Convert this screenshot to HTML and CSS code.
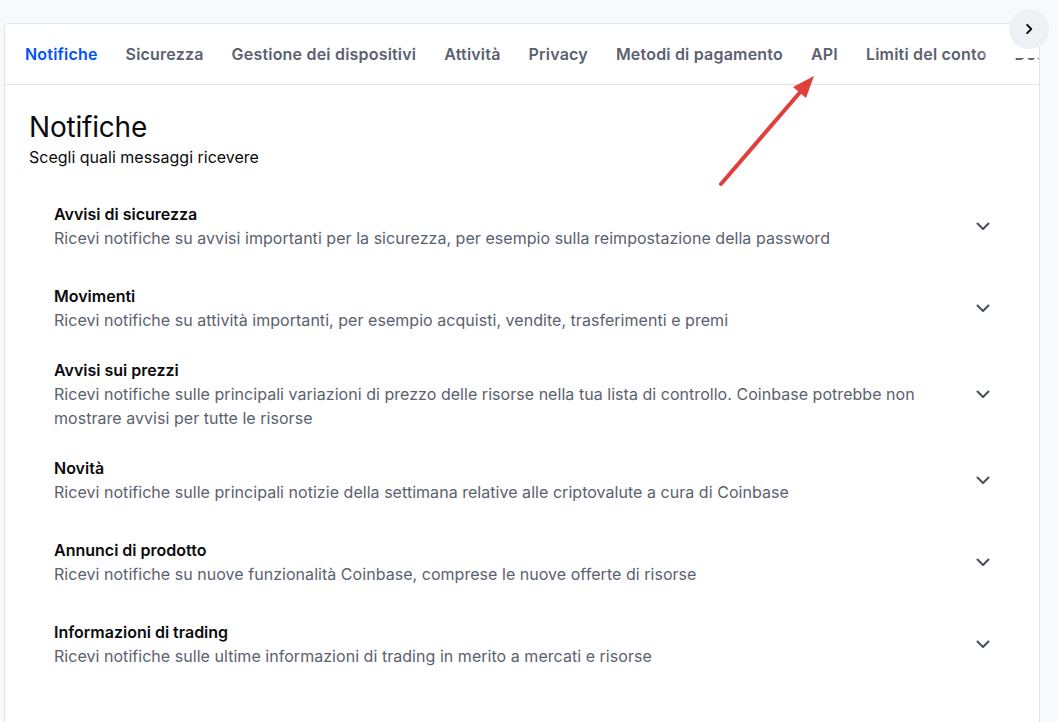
FILE: index.html
```html
<!DOCTYPE html>
<html lang="it">
<head>
<meta charset="utf-8">
<title>Notifiche</title>
<link rel="stylesheet" href="styles.css">
</head>
<body>
<div class="page">
  <div class="card">
    <nav class="tabs">
      <span class="tab active">Notifiche</span>
      <span class="tab">Sicurezza</span>
      <span class="tab">Gestione dei dispositivi</span>
      <span class="tab">Attività</span>
      <span class="tab">Privacy</span>
      <span class="tab">Metodi di pagamento</span>
      <span class="tab">API</span>
      <span class="tab">Limiti del conto</span>
      <span class="tab">Documenti</span>
      <div class="tab-fade"></div>
    </nav>
    <section class="content">
      <h1 class="title">Notifiche</h1>
      <p class="subtitle">Scegli quali messaggi ricevere</p>
      <div class="list">
        <div class="row">
          <div class="row-text">
            <div class="row-title">Avvisi di sicurezza</div>
            <div class="row-desc">Ricevi notifiche su avvisi importanti per la sicurezza, per esempio sulla reimpostazione della password</div>
          </div>
          <svg class="chev" viewBox="0 0 24 24"><path d="M6.5 9.5l5.5 5.5 5.5-5.5"/></svg>
        </div>
        <div class="row">
          <div class="row-text">
            <div class="row-title">Movimenti</div>
            <div class="row-desc">Ricevi notifiche su attività importanti, per esempio acquisti, vendite, trasferimenti e premi</div>
          </div>
          <svg class="chev" viewBox="0 0 24 24"><path d="M6.5 9.5l5.5 5.5 5.5-5.5"/></svg>
        </div>
        <div class="row">
          <div class="row-text">
            <div class="row-title">Avvisi sui prezzi</div>
            <div class="row-desc">Ricevi notifiche sulle principali variazioni di prezzo delle risorse nella tua lista di controllo. Coinbase potrebbe non mostrare avvisi per tutte le risorse</div>
          </div>
          <svg class="chev" viewBox="0 0 24 24"><path d="M6.5 9.5l5.5 5.5 5.5-5.5"/></svg>
        </div>
        <div class="row">
          <div class="row-text">
            <div class="row-title">Novità</div>
            <div class="row-desc">Ricevi notifiche sulle principali notizie della settimana relative alle criptovalute a cura di Coinbase</div>
          </div>
          <svg class="chev" viewBox="0 0 24 24"><path d="M6.5 9.5l5.5 5.5 5.5-5.5"/></svg>
        </div>
        <div class="row">
          <div class="row-text">
            <div class="row-title">Annunci di prodotto</div>
            <div class="row-desc">Ricevi notifiche su nuove funzionalità Coinbase, comprese le nuove offerte di risorse</div>
          </div>
          <svg class="chev" viewBox="0 0 24 24"><path d="M6.5 9.5l5.5 5.5 5.5-5.5"/></svg>
        </div>
        <div class="row">
          <div class="row-text">
            <div class="row-title">Informazioni di trading</div>
            <div class="row-desc">Ricevi notifiche sulle ultime informazioni di trading in merito a mercati e risorse</div>
          </div>
          <svg class="chev" viewBox="0 0 24 24"><path d="M6.5 9.5l5.5 5.5 5.5-5.5"/></svg>
        </div>
      </div>
    </section>
  </div>
  <button class="scroll-btn" aria-label="Avanti">
    <svg viewBox="0 0 24 24"><path d="M9.5 6.5l5.5 5.5-5.5 5.5"/></svg>
  </button>
  <svg class="annot" viewBox="0 0 1058 722" width="1058" height="722">
    <line x1="721" y1="184" x2="802" y2="90" />
    <polygon points="814,76 806,98 793,87" />
  </svg>
</div>
</body>
</html>
```
FILE: styles.css
```css
* { box-sizing: border-box; }
html, body { margin: 0; padding: 0; }
body {
  background: #f8f9fb;
  font-family: Inter, "Noto Sans", "Liberation Sans", sans-serif;
  color: #0a0b0d;
  overflow: hidden;
}
.page {
  position: relative;
  width: 1058px;
  height: 722px;
  padding: 23px 18px 0 4px;
}
.card {
  background: #fff;
  border: 1px solid #e1e3e8;
  border-radius: 4px 0 0 0;
  height: 760px;
}
.tabs {
  position: relative;
  display: flex;
  align-items: center;
  gap: 28px;
  height: 61px;
  padding-left: 20px;
  border-bottom: 1px solid #e1e3e8;
  overflow: hidden;
  white-space: nowrap;
}
.tab {
  font-size: 16px;
  font-weight: 600;
  line-height: 24px;
  letter-spacing: 0.2px;
  color: #5b616e;
  flex: none;
}
.tab.active { color: #0052ff; }
.tab-fade {
  position: absolute;
  top: 0;
  right: 0;
  width: 62px;
  height: 34px;
  background: linear-gradient(to right, rgba(255,255,255,0) 0, #fff 30px);
}
.content {
  padding: 24px 44px 0 24px;
}
.title {
  margin: 0;
  font-size: 28px;
  font-weight: 400;
  line-height: 36px;
  letter-spacing: -0.2px;
}
.subtitle {
  margin: 0;
  font-size: 16px;
  line-height: 24px;
}
.list {
  margin-top: 16px;
  padding-left: 25px;
}
.row {
  display: flex;
  align-items: center;
  gap: 16px;
  padding: 9px 0;
}
.row-text {
  flex: 1;
  min-height: 64px;
  display: flex;
  flex-direction: column;
  justify-content: center;
}
.row-title {
  font-size: 16px;
  font-weight: 600;
  line-height: 24px;
}
.row-desc {
  font-size: 16px;
  line-height: 24px;
  letter-spacing: 0.04px;
  color: #5b616e;
}
.chev {
  width: 24px;
  height: 24px;
  flex: none;
  fill: none;
  stroke: #4a4f5a;
  stroke-width: 2;
  stroke-linecap: round;
  stroke-linejoin: round;
}
.scroll-btn {
  position: absolute;
  top: 9px;
  left: 1009px;
  width: 40px;
  height: 40px;
  border: none;
  border-radius: 50%;
  background: #eef0f3;
  padding: 0;
  display: flex;
  align-items: center;
  justify-content: center;
}
.scroll-btn svg {
  width: 18px;
  height: 18px;
  fill: none;
  stroke: #0a0b0d;
  stroke-width: 2.6;
  stroke-linecap: round;
  stroke-linejoin: round;
}
.annot {
  position: absolute;
  top: 0;
  left: 0;
  pointer-events: none;
}
.annot line {
  stroke: #e0403a;
  stroke-width: 4;
  stroke-linecap: round;
}
.annot polygon { fill: #e0403a; }
```
